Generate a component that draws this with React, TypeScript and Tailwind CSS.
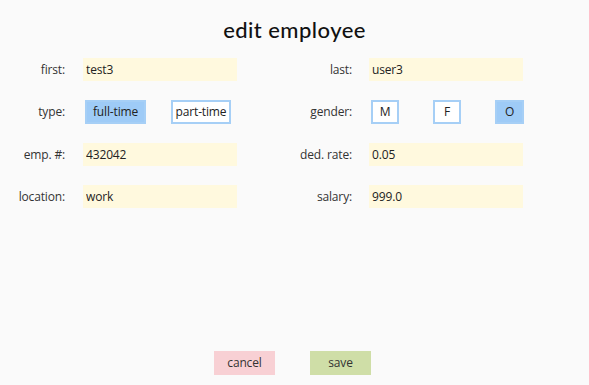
import React, { useState } from 'react';

const inputCls =
  'w-[154px] h-[23px] bg-[#fff9de] px-[3px] text-[12px] tracking-[-0.15px] text-[#222] outline-none';

function Label({ text }: { text: string }) {
  return <div className="w-[65px] whitespace-nowrap text-right text-[12px] tracking-[-0.15px] text-[#333]">{text}</div>;
}

function Toggle({ label, active, onClick, w }: { label: string; active: boolean; onClick: () => void; w: string }) {
  return (
    <button
      onClick={onClick}
      className={`${w} h-[24px] border-2 whitespace-nowrap text-[12px] tracking-[-0.15px] text-[#222] flex items-center justify-center ${
        active ? 'bg-[#9ecbf7] border-[#a6cff6]' : 'bg-white border-[#a6cff6]'
      }`}
    >
      {label}
    </button>
  );
}

export default function App() {
  const [type, setType] = useState('full-time');
  const [gender, setGender] = useState('O');
  const [form, setForm] = useState({
    first: 'test3',
    last: 'user3',
    emp: '432042',
    rate: '0.05',
    location: 'work',
    salary: '999.0',
  });
  const set = (k: keyof typeof form) => (e: React.ChangeEvent<HTMLInputElement>) =>
    setForm({ ...form, [k]: e.target.value });

  return (
    <div className="h-[385px] w-full bg-[#fafafa] flex flex-col" style={{ fontFamily: '"Open Sans", sans-serif' }}>
      <h1
        className="pt-[13px] h-[58px] text-center text-[22px] font-medium text-[#111] tracking-[0.45px]"
        style={{ fontFamily: 'Lato, sans-serif' }}
      >
        edit employee
      </h1>

      <div className="flex flex-col gap-[19px]">
        <div className="flex items-center">
          <Label text="first:" />
          <input className={`ml-[18px] ${inputCls}`} value={form.first} onChange={set('first')} />
          <div className="ml-[50px]"><Label text="last:" /></div>
          <input className={`ml-[17px] ${inputCls}`} value={form.last} onChange={set('last')} />
        </div>

        <div className="flex items-center">
          <Label text="type:" />
          <div className="ml-[20px] flex gap-[25px]">
            <Toggle label="full-time" w="w-[61px]" active={type === 'full-time'} onClick={() => setType('full-time')} />
            <Toggle label="part-time" w="w-[60px]" active={type === 'part-time'} onClick={() => setType('part-time')} />
          </div>
          <div className="ml-[56px]"><Label text="gender:" /></div>
          <div className="ml-[19px] flex gap-[34px]">
            <Toggle label="M" w="w-[28px]" active={gender === 'M'} onClick={() => setGender('M')} />
            <Toggle label="F" w="w-[28px]" active={gender === 'F'} onClick={() => setGender('F')} />
            <Toggle label="O" w="w-[29px]" active={gender === 'O'} onClick={() => setGender('O')} />
          </div>
        </div>

        <div className="flex items-center">
          <Label text="emp. #:" />
          <input className={`ml-[18px] ${inputCls}`} value={form.emp} onChange={set('emp')} />
          <div className="ml-[50px]"><Label text="ded. rate:" /></div>
          <input className={`ml-[17px] ${inputCls}`} value={form.rate} onChange={set('rate')} />
        </div>

        <div className="flex items-center">
          <Label text="location:" />
          <input className={`ml-[18px] ${inputCls}`} value={form.location} onChange={set('location')} />
          <div className="ml-[50px]"><Label text="salary:" /></div>
          <input className={`ml-[17px] ${inputCls}`} value={form.salary} onChange={set('salary')} />
        </div>
      </div>

      <div className="mt-auto mb-[10px] flex justify-center gap-[35px] pr-[4px]">
        <button className="w-[61px] h-[24px] bg-[#f8d0d4] text-[12px] tracking-[-0.15px] text-[#333]">cancel</button>
        <button className="w-[61px] h-[24px] bg-[#cfdea7] text-[12px] tracking-[-0.15px] text-[#333]">save</button>
      </div>
    </div>
  );
}
